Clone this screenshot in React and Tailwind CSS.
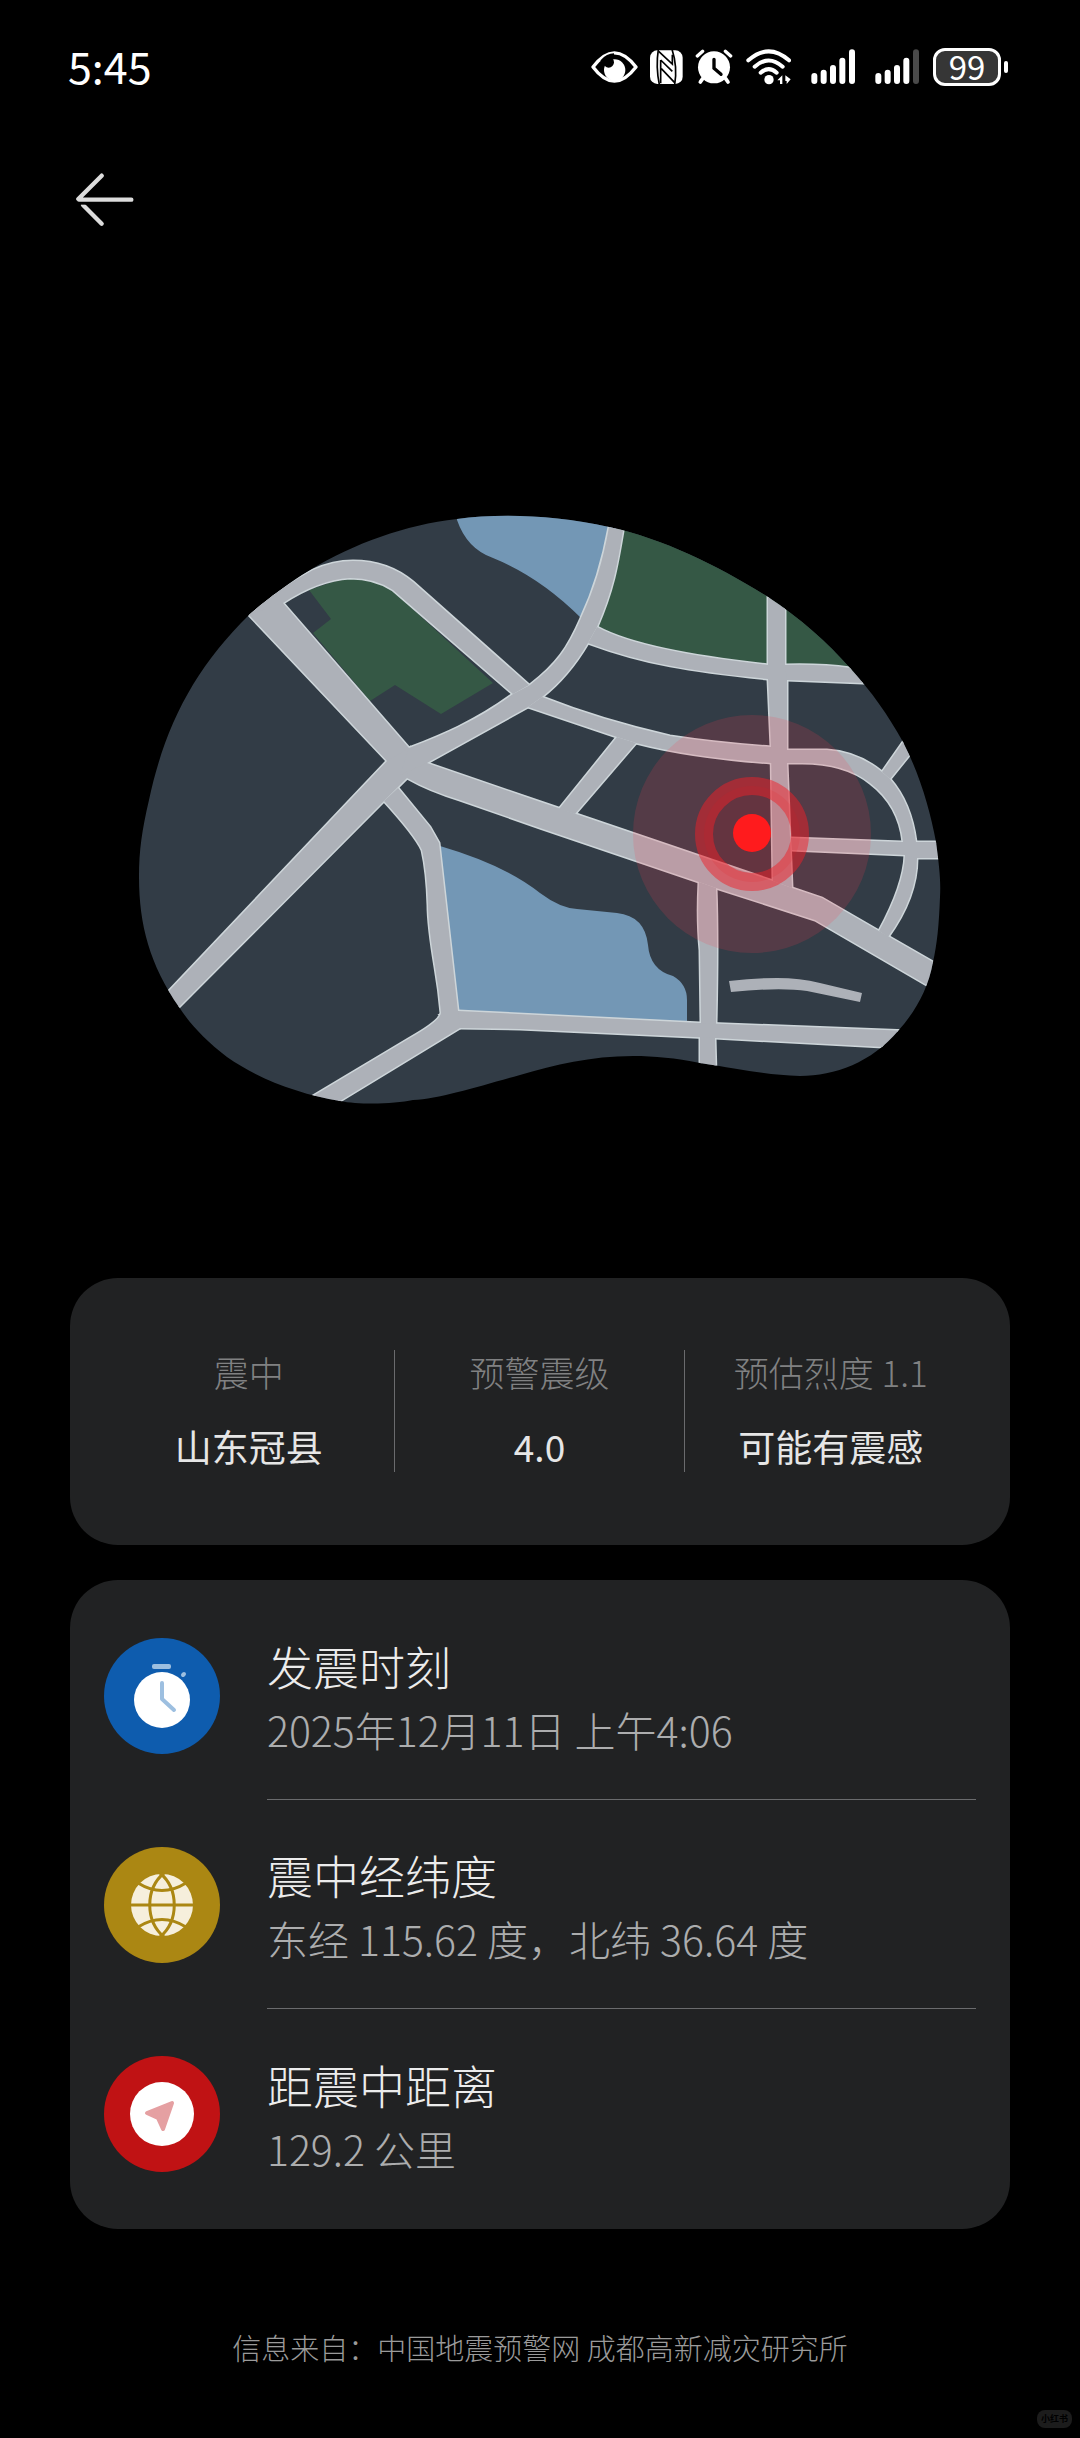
import React from 'react';

const stats = [
  { label: '震中', value: '山东冠县' },
  { label: '预警震级', value: '4.0' },
  { label: '预估烈度 1.1', value: '可能有震感' },
];

const BLOB =
  'M139 877C139 850 142 830 149 800C165 725 195 668 249 615C266 600 290 582 310 570C355 543 405 525 457 519C500 513 555 515 609 527C665 539 720 567 768 597C800 618 828 643 850 668C872 692 888 715 903 742C920 775 930 810 936 842C939 865 941 880 940 897C939 925 937 945 933 962C928 990 915 1012 898 1031C872 1062 835 1076 800 1076C765 1075 740 1069 700 1063C675 1058 655 1056 633 1056C590 1056 555 1065 520 1075C480 1086 440 1099 413 1100C395 1104 360 1105 340 1101C300 1094 260 1080 227 1057C205 1040 190 1024 179 1007C150 965 139 925 139 877Z';

const roads = [
  // main road, north-west to south-east
  'M249 615L270 592L283 603L409 748L427 763L520 795L576 814L773 881L792 888L822 898L879 931L933 962L950 971L940 992L925 984L815 920L716 888L699 882L540 828L460 800Q430 791 407 778L387 761Z',
  'M387 761L168 992L160 1005L170 1016L179 1007L384 801L407 778L409 748Z',
  // loop around the park
  'M249 615Q277 589 313 570Q333 561 353 561Q388 561 413 582L529 685L513 694L393 590Q375 578 350 578Q318 580 283 603Z',
  'M409 748C440 736 475 722 513 694L530 685C557 664 568 648 581 618C595 588 603 560 609 527L612 515L626 515L623 531C617 567 613 590 597 627L588 643C575 665 560 683 542 697L528 707L427 763L400 775Z',
  'M597 627C630 645 690 656 768 665L785 665Q822 664 850 668L880 670L880 684L863 683L787 680L768 679C690 671 645 664 588 643Z',
  'M768 590L785 590L785 665L787 680L787 763L792 888L773 881L771 747L768 679Z',
  'M542 697Q600 720 670 736Q715 743 771 747L787 750L827 750Q858 752 882 772L890 779Q911 803 916 842L917 858Q917 897 888 937L879 931Q904 885 905 855L903 842Q899 805 870 783Q845 763 802 763L771 763Q690 757 636 743L617 737L528 707Z',
  'M617 737L559 809L575 814L636 743Z',
  'M882 772L910 732L920 742L890 779Z',
  'M791 838L902 842L945 842L945 858L917 858L905 855L792 850Z',
  'M699 882Q697 920 700 950L701 1023L700 1036L700 1075L716 1075L715 1038L716 1023Q718 940 716 888Z',
  'M458 1011L700 1023L910 1031L900 1047L883 1047L715 1038L520 1029L460 1028L441 1015Z',
  'M398 788L430 827L439 843L458 1011L460 1028L340 1101L330 1110L300 1105L313 1096L410 1038Q440 1021 441 1013Q439 990 435 967Q428 925 428 905Q427 872 422 850Q415 835 384 801Z',
];

const iconRow = 'h-[38px] shrink-0';

function EyeIcon() {
  return (
    <svg viewBox="91 54 141 114" className={`${iconRow} w-[47px]`} fill="none">
      <path d="M97 111Q161 26 226 111Q161 196 97 111Z" stroke="#fff" strokeWidth="10" strokeLinejoin="round" />
      <circle cx="162" cy="120" r="32" fill="#fff" />
      <circle cx="144" cy="97" r="16" fill="#000" />
      <path d="M122 94Q140 74 160 74" stroke="#000" strokeWidth="8" />
    </svg>
  );
}

function NfcIcon() {
  return (
    <svg viewBox="271 54 99 114" className={`${iconRow} w-[33px]`}>
      <rect x="271" y="61" width="98" height="101" rx="22" fill="#fff" />
      <g stroke="#000" strokeWidth="5" fill="none">
        <path d="M296 58Q288 110 299 164M337 58Q354 110 345 164" />
        <path d="M297 64L338 102V74M303 90L338 124M303 90V160M305 116L345 158" />
      </g>
    </svg>
  );
}

function AlarmIcon() {
  return (
    <svg viewBox="406 54 114 114" className={`${iconRow} w-[38px]`} fill="none" stroke="#fff" strokeLinecap="round">
      <circle cx="463" cy="112" r="48" fill="#fff" stroke="none" />
      <path d="M413 78L429 64M513 78L497 64" strokeWidth="10" />
      <path d="M429 146L422 156M498 146L505 156" strokeWidth="11" />
      <path d="M463 88V115L484 133" stroke="#000" strokeWidth="10" />
    </svg>
  );
}

function WifiIcon() {
  return (
    <svg viewBox="556 54 138 114" className={`${iconRow} w-[46px]`} fill="none" stroke="#fff" strokeLinecap="round" strokeWidth="12">
      <path d="M566 91Q627 37 688 91" />
      <path d="M585 110Q627 73 669 110" />
      <path d="M603 128Q627 107 651 128" />
      <circle cx="628" cy="149" r="14" fill="#fff" stroke="none" />
      <path d="M653 151L668 136V162H661V151ZM677 136L693 148L681 162V153H677Z" fill="#fff" stroke="none" />
    </svg>
  );
}

function SignalIcon({ weak }) {
  return (
    <svg viewBox="755 54 132 114" className={`${iconRow} w-[44px]`} fill="none" stroke="#fff" strokeWidth="18" strokeLinecap="round">
      <path d="M765 138V153M793 128V153M821 114V153M849 92V153" />
      <path d="M878 67V153" stroke={weak ? '#4a4a4a' : '#fff'} />
    </svg>
  );
}

function Battery() {
  return (
    <div className="flex items-center gap-[3px]">
      <span className="flex h-[38px] w-[68px] items-center justify-center rounded-xl border-[3px] border-white bg-[#363636] pb-[2px] text-[33px] leading-none text-white">
        99
      </span>
      <span className="h-3 w-1 rounded-full bg-white" />
    </div>
  );
}

function StatusBar() {
  return (
    <header className="flex h-[38px] items-center justify-between pr-[72px] pl-[68px]">
      <time className="pb-1 text-[43px] leading-none">5:45</time>
      <div className="flex items-center gap-5">
        <div className="flex items-center gap-3">
          <EyeIcon />
          <NfcIcon />
          <AlarmIcon />
          <WifiIcon />
        </div>
        <SignalIcon />
        <div className="flex items-center gap-[14px]">
          <SignalIcon weak />
          <Battery />
        </div>
      </div>
    </header>
  );
}

function EpicenterMap() {
  return (
    <svg viewBox="130 500 820 620" className="block w-full" role="img" aria-label="震中地图">
      <defs>
        <clipPath id="blob">
          <path d={BLOB} />
        </clipPath>
      </defs>
      <g clipPath="url(#blob)">
        <rect x="130" y="500" width="820" height="620" fill="#323c46" />
        <path d="M457 510V520Q467 549 493 558Q540 577 581 618L600 600L620 510Z" fill="#7397b5" />
        <path d="M440 846Q505 865 540 893Q560 908 577 909L617 913Q645 916 648 945Q650 970 673 976Q687 984 687 1000V1026H455Z" fill="#7397b5" />
        <path d="M309 590L331 619L313 633L370 701L395 685L441 714L493 683L403 600Q380 578 353 575Z" fill="#355845" />
        <path d="M620 510L612 570L593 632L640 655L768 674L900 676V510Z" fill="#355845" />
        {/* road edges first, then the surfaces, so that crossings stay open */}
        <g fill="none" stroke="#cdd5d9" strokeWidth="3">
          {roads.map((d) => (
            <path key={d} d={d} />
          ))}
        </g>
        <g fill="#adb1b8">
          {roads.map((d) => (
            <path key={d} d={d} />
          ))}
          <path d="M729 981Q755 978 777 978Q800 978 820 983L862 993L860 1002L807 991Q780 987 731 992Z" />
        </g>
      </g>
      <circle cx="752" cy="834" r="119" fill="#ff3c50" fillOpacity="0.17" />
      <circle cx="752" cy="834" r="48" fill="#e00a14" fillOpacity="0.12" />
      <circle cx="752" cy="834" r="48" fill="none" stroke="#f02028" strokeOpacity="0.5" strokeWidth="18" />
      <circle cx="752" cy="833" r="19" fill="#ff1b1d" />
    </svg>
  );
}

function ClockBadge() {
  return (
    <svg viewBox="0 0 116 116" className="size-[116px] shrink-0">
      <circle cx="58" cy="58" r="58" fill="#0e5cae" />
      <circle cx="58" cy="62" r="28" fill="#fff" />
      <rect x="48" y="26" width="19" height="5" rx="2" fill="#9dbfe0" />
      <path d="M79 37L80 36" stroke="#9dbfe0" strokeWidth="4" strokeLinecap="round" />
      <path d="M58 45V61L70 72" fill="none" stroke="#9dbfe0" strokeWidth="4" strokeLinecap="round" strokeLinejoin="round" />
    </svg>
  );
}

function GlobeBadge() {
  return (
    <svg viewBox="0 0 116 116" className="size-[116px] shrink-0">
      <circle cx="58" cy="58" r="58" fill="#ab8713" />
      <circle cx="58" cy="58" r="31" fill="#f6efdc" />
      <g fill="none" stroke="#ab8713" strokeWidth="3">
        <path d="M25 58H91" />
        <path d="M34 36Q58 51 82 36M34 80Q58 65 82 80" />
        <path d="M60 26C41 42 41 74 60 90M56 26C75 42 75 74 56 90" />
      </g>
    </svg>
  );
}

function CompassBadge() {
  return (
    <svg viewBox="0 0 116 116" className="size-[116px] shrink-0">
      <circle cx="58" cy="58" r="58" fill="#c01214" />
      <circle cx="58" cy="58" r="32" fill="#fff" />
      <path d="M43 57L68 47L59 73L54 62Z" fill="#e5a0a2" stroke="#e5a0a2" strokeWidth="4" strokeLinejoin="round" />
    </svg>
  );
}

const details = [
  { title: '发震时刻', text: '2025年12月11日 上午4:06', icon: <ClockBadge /> },
  { title: '震中经纬度', text: '东经 115.62 度，北纬 36.64 度', icon: <GlobeBadge /> },
  { title: '距震中距离', text: '129.2 公里', icon: <CompassBadge /> },
];

export default function App() {
  return (
    <div className="min-h-screen bg-black pt-12 pb-2 font-['Noto_Sans_CJK_SC',sans-serif] text-white">
      <StatusBar />

      <nav className="mt-[87px] px-[76px]">
        <button type="button" aria-label="返回" className="block">
          <svg viewBox="108 430 174 162" className="h-[54px] w-[58px]" fill="none" stroke="#dcdcdc" strokeWidth="13" strokeLinecap="round">
            <path d="M185 438L115 508M118 510H274" />
            <path d="M185 582L129 526" />
            <path d="M112 521H150" stroke="#000" strokeWidth="8" strokeLinecap="butt" />
          </svg>
        </button>
      </nav>

      <main className="mt-[273px]">
        <div className="px-[130px]">
          <EpicenterMap />
        </div>

        <div className="mt-[158px] flex flex-col gap-[35px] px-[70px]">
          <section className="rounded-[48px] bg-[#212223] px-[34px] pt-[72px] pb-[73px]">
            <dl className="grid grid-cols-3 divide-x divide-[#6a6b6d] text-center">
              {stats.map((stat) => (
                <div key={stat.label} className="flex flex-col gap-[26px]">
                  <dt className="text-[35px] leading-[44px] font-light text-[#808182]">{stat.label}</dt>
                  <dd className="text-[37px] leading-[52px] text-[#e6e6e6]">{stat.value}</dd>
                </div>
              ))}
            </dl>
          </section>

          <ul className="rounded-[48px] bg-[#212223] px-[34px] py-[11px]">
            {details.map((item) => (
              <li key={item.title} className="group flex h-[209px] items-center gap-[47px]">
                {item.icon}
                <div className="flex h-full flex-1 flex-col justify-center border-b border-[#6a6b6d] pt-1 group-last:border-b-0">
                  <h2 className="text-[46px] leading-[64px] font-light text-[#ececec]">{item.title}</h2>
                  <p className="text-[41px] leading-[64px] font-light text-[#acadae]">{item.text}</p>
                </div>
              </li>
            ))}
          </ul>
        </div>
      </main>

      <footer className="mt-24">
        <p className="text-center text-[29px] leading-[44px] font-light text-[#9a9a9a]">
          信息来自：中国地震预警网 成都高新减灾研究所
        </p>
        <div className="mt-[41px] flex justify-end pr-2">
          <span className="rounded-lg bg-[#1c1c1c] px-1 text-[9px] leading-[18px] font-bold text-black">小红书</span>
        </div>
      </footer>
    </div>
  );
}
